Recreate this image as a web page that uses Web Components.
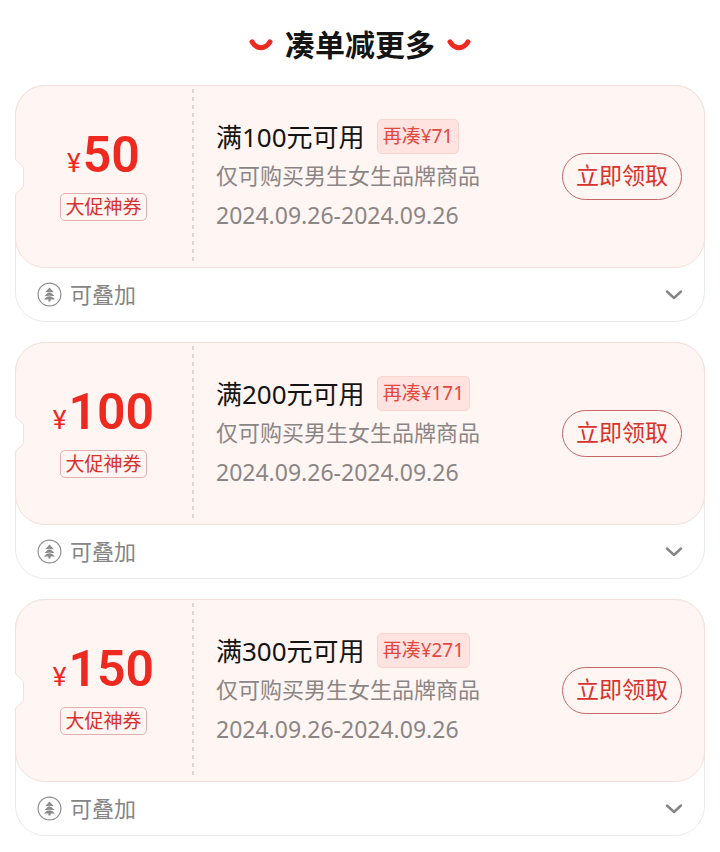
<!DOCTYPE html>
<html lang="zh-CN">
<head>
<meta charset="utf-8">
<meta name="viewport" content="width=device-width, initial-scale=1">
<title>凑单减更多</title>
<style>
  body {
    margin: 0;
    background: #fff;
    color: #141414;
    font-family: "Noto Sans", "Noto Sans CJK SC", sans-serif;
  }
</style>
</head>
<body>
<coupon-list>
  <span slot="title">凑单减更多</span>
  <coupon-card amount="50" badge="大促神券" gap="再凑¥71">
    <span slot="title">满100元可用</span>
    <span slot="scope">仅可购买男生女生品牌商品</span>
    <span slot="date">2024.09.26-2024.09.26</span>
    <span slot="note">可叠加</span>
  </coupon-card>
  <coupon-card amount="100" badge="大促神券" gap="再凑¥171">
    <span slot="title">满200元可用</span>
    <span slot="scope">仅可购买男生女生品牌商品</span>
    <span slot="date">2024.09.26-2024.09.26</span>
    <span slot="note">可叠加</span>
  </coupon-card>
  <coupon-card amount="150" badge="大促神券" gap="再凑¥271">
    <span slot="title">满300元可用</span>
    <span slot="scope">仅可购买男生女生品牌商品</span>
    <span slot="date">2024.09.26-2024.09.26</span>
    <span slot="note">可叠加</span>
  </coupon-card>
</coupon-list>

<script>
class CouponList extends HTMLElement {
  constructor() {
    super();
    const shadow = this.attachShadow({ mode: 'open' });
    const smile = `
      <svg width="24" height="12" viewBox="0 0 24 12" aria-hidden="true">
        <path d="M3 2.8C7.5 10.6 16.5 10.6 21 2.8" fill="none" stroke="#ee2a20" stroke-width="5" stroke-linecap="round"/>
      </svg>`;

    shadow.innerHTML = `
      <style>
        :host {
          display: flex;
          flex-direction: column;
          gap: 20px;
          padding: 25px 15px 16px;
        }

        h1 {
          display: flex;
          align-items: center;
          justify-content: center;
          gap: 12px;
          margin: 0;
          font-size: 30px;
          line-height: 40px;
          font-weight: 700;
        }
      </style>
      <h1>${smile}<slot name="title"></slot>${smile}</h1>
      <slot></slot>
    `;
  }
}
customElements.define('coupon-list', CouponList);

class CouponAmount extends HTMLElement {
  constructor() {
    super();
    this.attachShadow({ mode: 'open' }).innerHTML = `
      <style>
        :host {
          display: flex;
          align-items: baseline;
          gap: 2px;
          color: #ee2a20;
          font-family: Roboto, sans-serif;
          line-height: 44px;
        }

        .sign {
          font-size: 26px;
        }

        .value {
          font-size: 50px;
          font-weight: 600;
        }
      </style>
      <span class="sign">¥</span>
      <span class="value"><slot></slot></span>
    `;
  }
}
customElements.define('coupon-amount', CouponAmount);

class CouponCard extends HTMLElement {
  connectedCallback() {
    if (this.shadowRoot) return;
    const shadow = this.attachShadow({ mode: 'open' });

    shadow.innerHTML = `
      <style>
        :host {
          --line: #f6dedb;
          display: block;
          box-sizing: border-box;
          border: 1px solid #efe8e8;
          border-radius: 30px;
        }

        .ticket {
          position: relative;
          display: grid;
          grid-template-columns: 178px 1fr auto;
          align-items: center;
          box-sizing: border-box;
          min-height: 183px;
          margin: -1px -1px 0;
          padding-right: 22px;
          border: 1px solid var(--line);
          border-radius: 30px;
          background: #fff5f3;
        }

        .notch {
          position: absolute;
          left: -2px;
          top: 50%;
          margin-top: -20px;
        }

        .left {
          display: flex;
          flex-direction: column;
          align-items: center;
          justify-content: center;
          gap: 8px;
          box-sizing: border-box;
          align-self: stretch;
          margin: 3px 0;
          padding-right: 3px;
          background: repeating-linear-gradient(#e6d2d2 0 4px, transparent 4px 8px) right / 2px 100% no-repeat;
        }

        .badge {
          padding: 0 4px;
          border: 1px solid #dfb0ae;
          border-radius: 5px;
          color: #d8322c;
          font-size: 19px;
          line-height: 26px;
        }

        .info {
          padding-left: 22px;
          color: #8b8686;
        }

        .head {
          display: flex;
          align-items: center;
          gap: 12px;
        }

        h2 {
          margin: 0;
          color: #141414;
          font-size: 26px;
          line-height: 36px;
          font-weight: 400;
        }

        .gap {
          padding: 0 5px;
          border: 1px solid #fbd3cf;
          border-radius: 5px;
          background: #ffe3e0;
          color: #e2483f;
          font-size: 19px;
          line-height: 33px;
        }

        p {
          margin: 0;
          font-size: 22px;
          line-height: 40px;
        }

        .date {
          font-size: 23px;
        }

        button {
          font: inherit;
          background: none;
          cursor: pointer;
        }

        .get {
          padding: 0 13px 2px;
          border: 1px solid #c4666a;
          border-radius: 24px;
          color: #d8322c;
          font-size: 23px;
          line-height: 43px;
        }

        .foot {
          display: flex;
          align-items: center;
          gap: 8px;
          height: 53px;
          padding: 0 21px;
          color: #858585;
          font-size: 22px;
        }

        .note {
          padding-bottom: 4px;
        }

        .more {
          display: flex;
          margin-left: auto;
          padding: 0;
          border: 0;
        }

        svg {
          display: block;
        }
      </style>
      <div class="ticket">
        <svg class="notch" width="10" height="40" viewBox="0 0 10 40" aria-hidden="true">
          <path d="M0 1H1.5C1.5 6 9.5 7 9.5 12V28C9.5 33 1.5 34 1.5 39H0Z" fill="#fff"/>
          <path d="M1.5 1C1.5 6 9.5 7 9.5 12V28C9.5 33 1.5 34 1.5 39" fill="none" stroke="#f6dedb"/>
        </svg>
        <div class="left">
          <coupon-amount>${this.getAttribute('amount')}</coupon-amount>
          <span class="badge">${this.getAttribute('badge')}</span>
        </div>
        <div class="info">
          <div class="head">
            <h2><slot name="title"></slot></h2>
            <span class="gap">${this.getAttribute('gap')}</span>
          </div>
          <p><slot name="scope"></slot></p>
          <p class="date"><slot name="date"></slot></p>
        </div>
        <button class="get" type="button">立即领取</button>
      </div>
      <div class="foot">
        <svg width="25" height="25" viewBox="0 0 25 25" aria-hidden="true">
          <circle cx="12.5" cy="12.5" r="11.4" fill="none" stroke="#8f8f8f" stroke-width="1.2"/>
          <path d="M12.5 5.6L16.8 10.2H8.2ZM12.5 9L17.4 14H7.6ZM12.5 12.6L18 17.6H7V17.2ZM11.4 16H13.6V19.6H11.4Z" fill="#8a8a8a"/>
          <path d="M7.8 11.2L12.5 10.2L17.2 11.2M7.4 15L12.5 14L17.6 15" fill="none" stroke="#fff" stroke-width=".7"/>
        </svg>
        <span class="note"><slot name="note"></slot></span>
        <button class="more" type="button" aria-label="展开">
          <svg width="18" height="12" viewBox="0 0 18 12" aria-hidden="true">
            <path d="M2 2.5L9 9L16 2.5" fill="none" stroke="#858585" stroke-width="2.4" stroke-linecap="round" stroke-linejoin="round"/>
          </svg>
        </button>
      </div>
    `;
  }
}
customElements.define('coupon-card', CouponCard);
</script>
</body>
</html>
